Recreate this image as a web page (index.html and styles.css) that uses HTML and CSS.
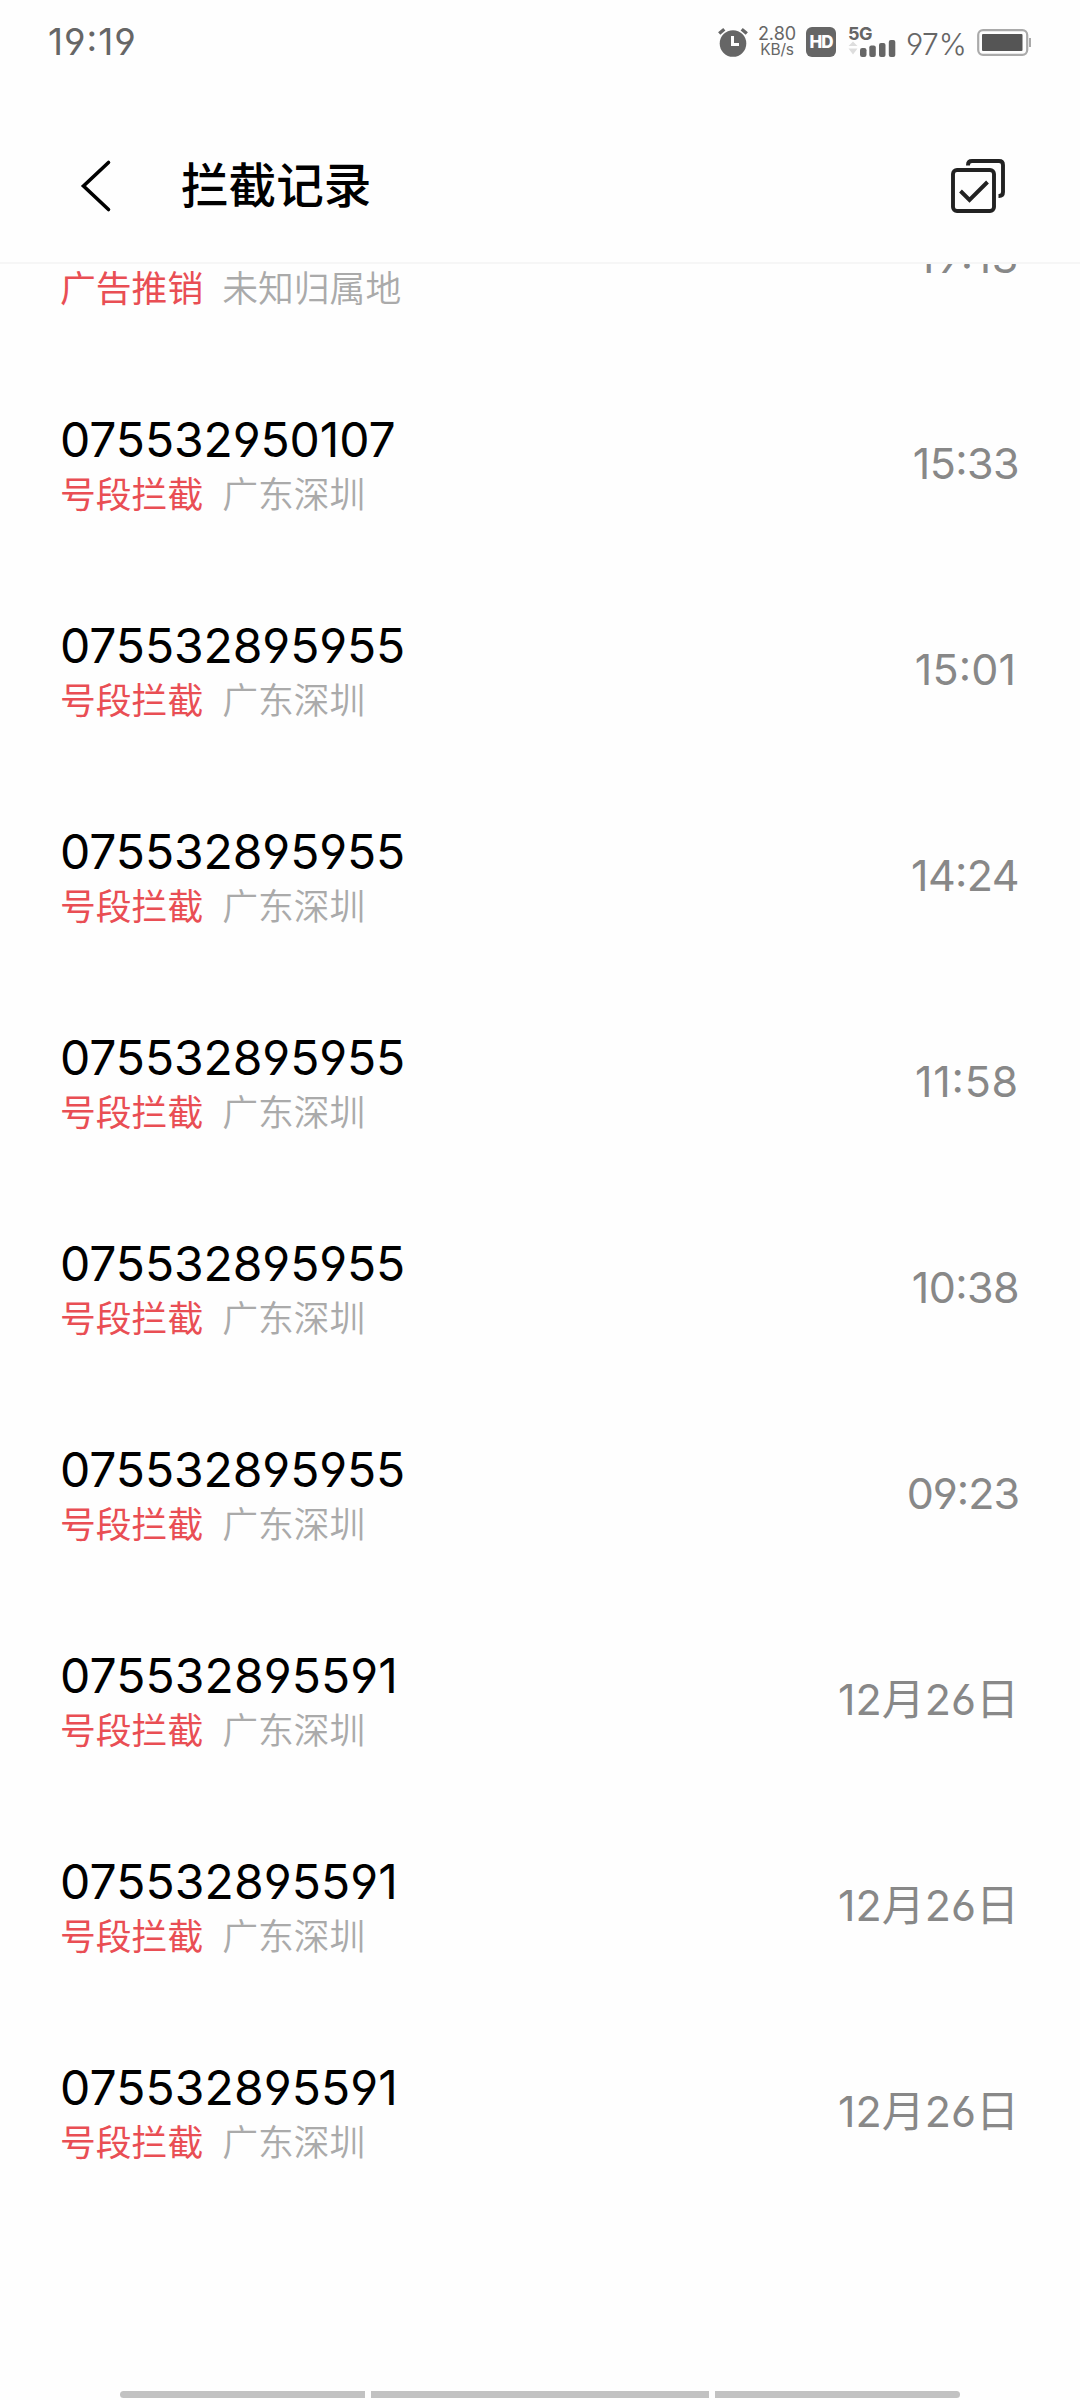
FILE: index.html
```html
<!DOCTYPE html>
<html lang="zh-CN">
<head>
<meta charset="utf-8">
<title>拦截记录</title>
<link rel="stylesheet" href="styles.css">
</head>
<body>
<div class="screen">
  <div class="status">
    <span class="clock">19:19</span>
    <div class="indicators">
      <svg class="alarm" width="30" height="30" viewBox="0 0 30 30"><circle cx="15" cy="16.5" r="13.3" fill="#666"/><path d="M1.2 6.5 6.3 2.2M28.8 6.500 23.700 2.200" stroke="#666" stroke-width="3.400"/><path d="M14.500 9v8.500h6.500" fill="none" stroke="#fff" stroke-width="3"/></svg>
      <div class="speed"><span class="rate">2.80</span><span class="unit">KB/s</span></div>
      <span class="hd">HD</span>
      <div class="signal">
        <span class="net">5G</span>
        <svg width="48" height="17" viewBox="0 0 48 17"><path d="M.5 6 5 1.500 9.500 6zM.5 8.500h9L5 14.500z" fill="#ddd"/><g fill="#666"><rect x="12" y="8" width="6.500" height="9" rx="2.200"/><rect x="21.300" y="5.500" width="6.500" height="11.500" rx="2"/><rect x="31" y="3" width="6.500" height="14" rx="2"/><rect x="40.800" y="0" width="6.500" height="17" rx="2"/></g></svg>
      </div>
      <span class="percent">97%</span>
      <svg class="battery" width="55" height="27" viewBox="0 0 55 27"><rect x="1.200" y="1.200" width="49" height="24.600" rx="4.800" fill="none" stroke="#aaa" stroke-width="2.200"/><rect x="5" y="5" width="40.500" height="17" rx="1" fill="#555"/><path d="M52 9h2v9h-2z" fill="#aaa"/></svg>
    </div>
  </div>
  <header class="header">
    <svg class="back" width="32" height="54" viewBox="0 0 32 54"><path d="M28.500 3.500 3.500 27l25 23.500" fill="none" stroke="#000" stroke-width="3.600" stroke-linecap="round"/></svg>
    <h1 class="title">拦截记录</h1>
    <svg class="select" width="56" height="56" viewBox="0 0 56 56" fill="none" stroke="#222" stroke-width="3.900"><rect x="3" y="12" width="41" height="41" rx="4"/><path d="M18 7.500V7q0-4 4-4h27q4 0 4 4v27q0 4-4 4h-.5M10.500 33l9 9L37.500 24"/></svg>
  </header>
  <main class="list">
    <div class="row first"><div class="info"><span class="number">&nbsp;</span><div class="meta"><span class="tag">广告推销</span><span class="place">未知归属地</span></div></div><span class="time">19:13</span></div>
    <div class="row"><div class="info"><span class="number">075532950107</span><div class="meta"><span class="tag">号段拦截</span><span class="place">广东深圳</span></div></div><span class="time">15:33</span></div>
    <div class="row"><div class="info"><span class="number">075532895955</span><div class="meta"><span class="tag">号段拦截</span><span class="place">广东深圳</span></div></div><span class="time ends-one">15:01</span></div>
    <div class="row"><div class="info"><span class="number">075532895955</span><div class="meta"><span class="tag">号段拦截</span><span class="place">广东深圳</span></div></div><span class="time">14:24</span></div>
    <div class="row"><div class="info"><span class="number">075532895955</span><div class="meta"><span class="tag">号段拦截</span><span class="place">广东深圳</span></div></div><span class="time double-one">11:58</span></div>
    <div class="row"><div class="info"><span class="number">075532895955</span><div class="meta"><span class="tag">号段拦截</span><span class="place">广东深圳</span></div></div><span class="time">10:38</span></div>
    <div class="row"><div class="info"><span class="number">075532895955</span><div class="meta"><span class="tag">号段拦截</span><span class="place">广东深圳</span></div></div><span class="time wide">09:23</span></div>
    <div class="row"><div class="info"><span class="number ends-one">075532895591</span><div class="meta"><span class="tag">号段拦截</span><span class="place">广东深圳</span></div></div><span class="time date">12月26日</span></div>
    <div class="row"><div class="info"><span class="number ends-one">075532895591</span><div class="meta"><span class="tag">号段拦截</span><span class="place">广东深圳</span></div></div><span class="time date">12月26日</span></div>
    <div class="row"><div class="info"><span class="number ends-one">075532895591</span><div class="meta"><span class="tag">号段拦截</span><span class="place">广东深圳</span></div></div><span class="time date">12月26日</span></div>
  </main>
  <div class="gestures"><i></i><i></i><i></i></div>
</div>
</body>
</html>
```
FILE: styles.css
```css
* { box-sizing: border-box; }
body { margin: 0; background: #fefefe; }
.screen {
  width: 1080px;
  height: 2400px;
  display: flex;
  flex-direction: column;
  overflow: hidden;
  font-family: Inter, "Noto Sans CJK SC", sans-serif;
  font-feature-settings: "cv03", "cv04", "calt";
  color: #000;
}
.status {
  flex: none;
  height: 84px;
  padding: 0 48px;
  display: flex;
  justify-content: space-between;
  align-items: center;
  color: #666;
}
.clock { font-size: 37px; line-height: 84px; letter-spacing: 1px; }
.indicators { display: flex; align-items: center; height: 30px; }
.speed { margin-left: 10px; width: 38px; display: flex; flex-direction: column; align-items: center; white-space: nowrap; }
.rate { font-size: 18px; line-height: 16px; }
.unit { font-size: 15.5px; line-height: 16px; letter-spacing: -0.2px; }
.hd {
  margin-left: 10px;
  width: 30px;
  height: 30px;
  border-radius: 6px;
  background: #666;
  color: #fff;
  font-size: 17px;
  font-weight: 800;
  line-height: 30px;
  letter-spacing: -1px;
  text-align: center;
}
.signal { margin-left: 12px; width: 48px; height: 30px; display: flex; flex-direction: column; }
.signal svg { display: block; }
.net { font-size: 18px; line-height: 13px; font-weight: 700; letter-spacing: -0.5px; }
.percent { margin-left: 10px; width: 63px; font-size: 30px; line-height: 30px; font-weight: 300; padding-top: 4px; box-sizing: content-box; }
.battery { margin-left: 8px; }
.header {
  flex: none;
  height: 180px;
  padding: 26px 74px 0 80px;
  display: flex;
  align-items: center;
  border-bottom: 2px solid #f6f6f6;
}
.title { margin: 0 auto 0 69px; font-size: 47.6px; line-height: 60px; font-weight: 500; }
.list { flex: none; height: 2100px; overflow: hidden; }
.row {
  height: 206px;
  padding: 0 61px 0 60px;
  display: flex;
  justify-content: space-between;
  align-items: center;
}
.first { margin-top: -110px; }
.info { display: flex; flex-direction: column; padding-top: 8px; }
.number { font-size: 48px; line-height: 55px; letter-spacing: -0.1px; }
.number.ends-one { letter-spacing: 0.1px; }
.meta { display: flex; gap: 19px; font-size: 35.8px; line-height: 56px; }
.tag { color: #e94e54; }
.place { color: #aaa; font-weight: 350; }
.time { font-size: 43px; line-height: 60px; color: #888; letter-spacing: -0.6px; }
.time.ends-one { padding-right: 3px; letter-spacing: 0.1px; }
.double-one { letter-spacing: 0.8px; }
.wide { letter-spacing: -1px; }
.first .time { letter-spacing: 0.6px; }
.date { letter-spacing: 0; }
.gestures { flex: none; display: flex; gap: 6px; padding: 27px 120px 0; }
.gestures i { height: 7px; flex: 245 1 0; background: #c2c2c2; }
.gestures i:nth-child(2) { flex-grow: 338; }
.gestures i:first-child { border-radius: 4px 0 0 4px; }
.gestures i:last-child { border-radius: 0 4px 4px 0; }
```
